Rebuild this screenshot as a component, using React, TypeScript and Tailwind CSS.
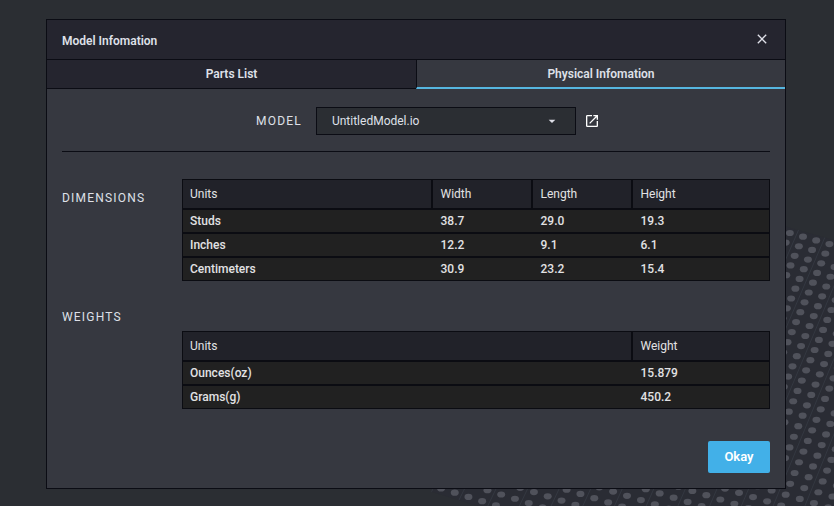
import { useState } from "react";
import { MdArrowDropDown, MdClose, MdOpenInNew } from "react-icons/md";

type TableProps = {
  label: string;
  columns: { header: string; className: string }[];
  rows: string[][];
};

const dimensionColumns = [
  { header: "Units", className: "" },
  { header: "Width", className: "w-[100px]" },
  { header: "Length", className: "w-[100px]" },
  { header: "Height", className: "w-[138px]" },
];

const dimensionRows = [
  ["Studs", "38.7", "29.0", "19.3"],
  ["Inches", "12.2", "9.1", "6.1"],
  ["Centimeters", "30.9", "23.2", "15.4"],
];

const weightColumns = [
  { header: "Units", className: "" },
  { header: "Weight", className: "w-[138px]" },
];

const weightRows = [
  ["Ounces(oz)", "15.879"],
  ["Grams(g)", "450.2"],
];

const tabs = ["Parts List", "Physical Infomation"];

// perspective projection of a stud on the base plate
const project = (i: number, j: number) => {
  const d = 1 - 0.00108 * i - 0.0026 * j;
  return {
    x: 803 + (13.17 * i - 4.138 * j) / d,
    y: 236.7 + (3.69 * i + 9.51 * j) / d,
  };
};

const range = (from: number, to: number) =>
  Array.from({ length: to - from + 1 }, (_, n) => from + n);

const BasePlate = () => {
  const corners = [
    project(-16.5, -0.5),
    project(24, -0.5),
    project(24, 31.5),
    project(-16.5, 31.5),
  ];

  return (
    <svg
      className="absolute top-0 left-0 h-[506px] w-[834px]"
      viewBox="0 0 834 506"
      aria-hidden="true"
    >
      <polygon
        points={corners.map((p) => `${p.x},${p.y}`).join(" ")}
        fill="#2a2c34"
      />
      {range(-8, 12).map((n) => {
        const a = project(n * 2 - 0.5, -0.5);
        const b = project(n * 2 - 0.5, 31.5);
        return (
          <line key={n} x1={a.x} y1={a.y} x2={b.x} y2={b.y} stroke="#343841" />
        );
      })}
      {range(-16, 24).map((i) =>
        range(0, 31).map((j) => {
          const p = project(i, j);
          return (
            <ellipse
              key={`${i}-${j}`}
              cx={p.x}
              cy={p.y}
              rx={4}
              ry={3.1}
              fill="#50525b"
            />
          );
        })
      )}
    </svg>
  );
};

const DataTable = ({ label, columns, rows }: TableProps) => (
  <table
    aria-label={label}
    className="w-full table-fixed border-collapse border border-[#0b0c12] bg-[#212121] text-left text-xs text-[#e2e2e4]"
  >
    <thead>
      <tr className="h-[29px] border-b-2 border-[#0b0c12] bg-[#212229]">
        {columns.map((column) => (
          <th
            key={column.header}
            className={`border-r-2 border-[#0b0c12] pl-2 font-normal first:pl-[7px] last:border-r ${column.className}`}
          >
            {column.header}
          </th>
        ))}
      </tr>
    </thead>
    <tbody>
      {rows.map((row) => (
        <tr
          key={row[0]}
          className="h-6 border-b-2 border-[#0b0c12] font-medium last:border-b"
        >
          {row.map((cell, i) => (
            <td key={i} className="pl-[9px] first:pl-[7px]">
              {cell}
            </td>
          ))}
        </tr>
      ))}
    </tbody>
  </table>
);

const App = () => {
  const [activeTab, setActiveTab] = useState(tabs[1]);

  return (
    <div className="relative min-h-screen overflow-hidden bg-[#2b2e33] px-[46px] pt-[19px] pb-4 font-['Roboto',sans-serif] text-xs text-[#dfe0e8]">
      <BasePlate />

      {/* DIALOG */}
      <div
        role="dialog"
        aria-labelledby="title"
        className="relative mr-[2px] border border-[#0b0c14] bg-[#363840]"
      >
        {/* HEADER */}
        <div className="flex h-10 items-center justify-between border-b border-[#0b0c14] bg-[#25252f] px-[15px] pb-0.5">
          <h1 id="title" className="pt-1 font-semibold">
            Model Infomation
          </h1>
          <button aria-label="Close">
            <MdClose className="size-4" />
          </button>
        </div>

        {/* TABS */}
        <div role="tablist" className="grid h-[29px] grid-cols-2">
          {tabs.map((tab) => (
            <button
              key={tab}
              role="tab"
              aria-selected={tab === activeTab}
              onClick={() => setActiveTab(tab)}
              className={
                tab === activeTab
                  ? "border-b-2 border-l border-b-[#56b6e0] border-l-[#0b0c14] font-semibold"
                  : "border-b border-[#0b0c14] bg-[#25252f] font-semibold"
              }
            >
              {tab}
            </button>
          ))}
        </div>

        <div className="px-[15px] pt-[18px] pb-[15px]">
          {/* MODEL SELECT */}
          <div className="flex items-center justify-center gap-2 border-b border-[#0b0c14] pb-4 pl-6">
            <label htmlFor="model" className="mr-1.5 tracking-widest">
              MODEL
            </label>
            <div className="relative">
              <select
                id="model"
                className="h-7 w-[260px] appearance-none border border-[#0b0c14] bg-[#2b2e33] px-[15px]"
              >
                <option>UntitledModel.io</option>
              </select>
              <MdArrowDropDown className="pointer-events-none absolute top-1.5 right-4 size-4" />
            </div>
            <button aria-label="Open model">
              <MdOpenInNew className="size-4 text-white" />
            </button>
          </div>

          {/* DIMENSIONS */}
          <section className="mt-[27px] flex">
            <h2 className="w-[120px] shrink-0 pt-[11px] tracking-widest">
              DIMENSIONS
            </h2>
            <DataTable
              label="Dimensions"
              columns={dimensionColumns}
              rows={dimensionRows}
            />
          </section>

          {/* WEIGHTS */}
          <section className="mt-7">
            <h2 className="tracking-widest">WEIGHTS</h2>
            <div className="mt-1.5 pl-[120px]">
              <DataTable
                label="Weights"
                columns={weightColumns}
                rows={weightRows}
              />
            </div>
          </section>

          <div className="mt-8 flex justify-end">
            <button className="h-8 w-[62px] rounded-xs bg-[#42b0e8] text-[13px] font-semibold text-white">
              Okay
            </button>
          </div>
        </div>
      </div>
    </div>
  );
};

export default App;
